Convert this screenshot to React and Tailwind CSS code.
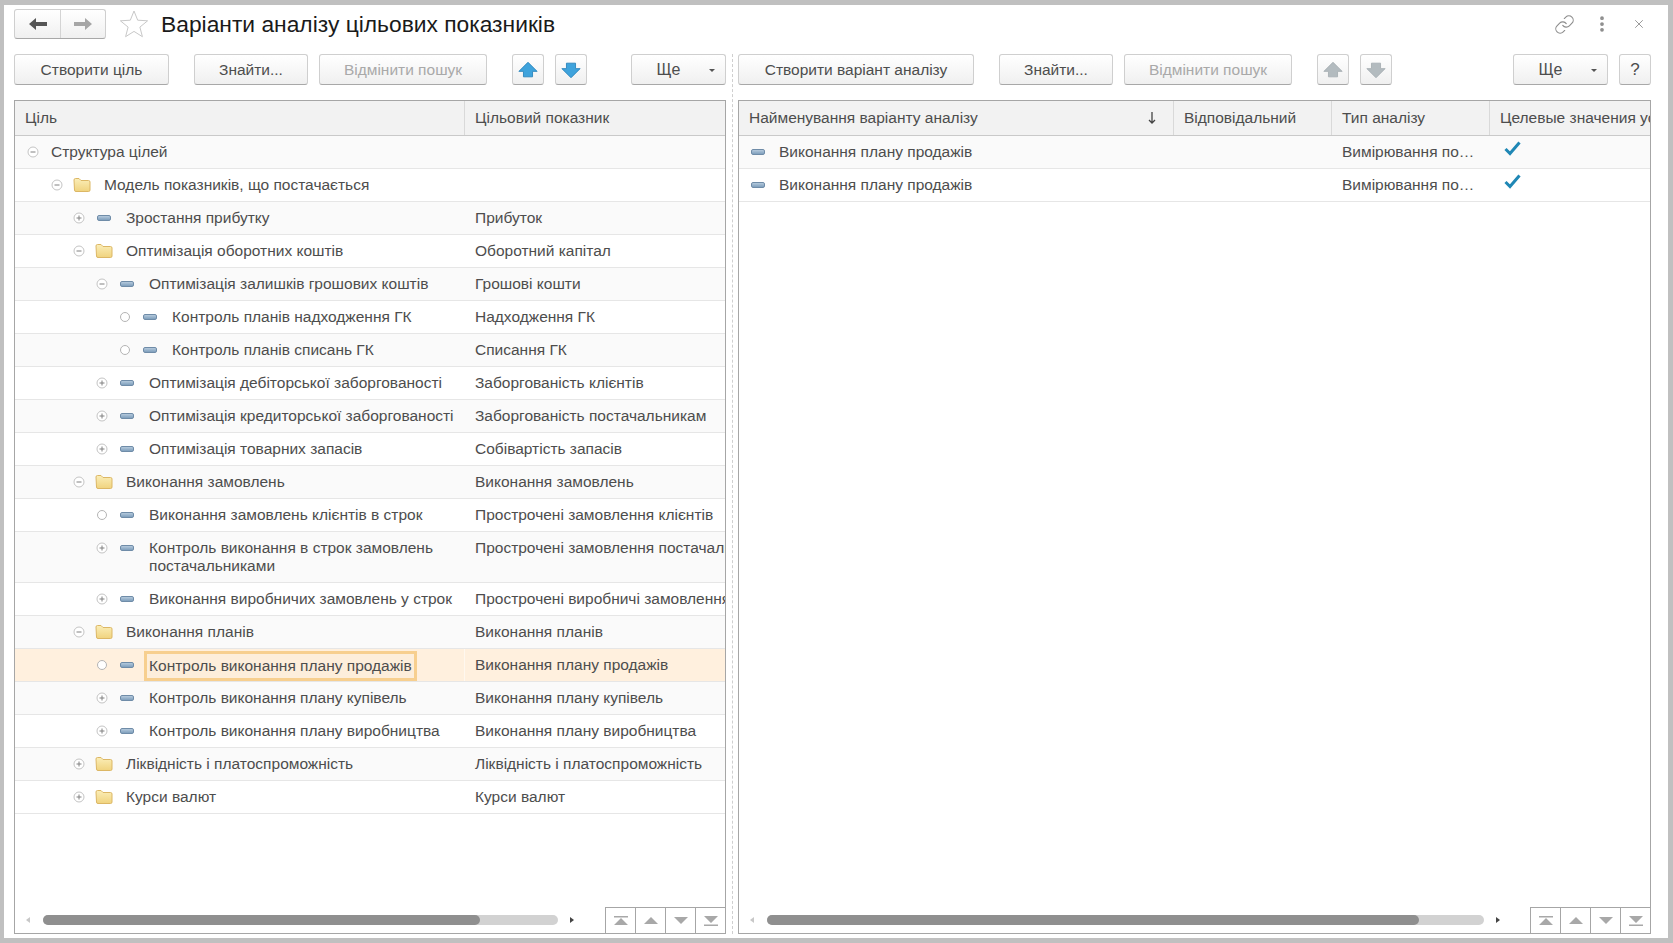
import { Link, MoreVertical, X } from 'lucide-react';

const treeRows = [
  { level: 0, mark: 'minus', name: 'Структура цілей', target: '' },
  { level: 1, mark: 'minus', icon: 'folder', name: 'Модель показників, що постачається', target: '' },
  { level: 2, mark: 'plus', icon: 'dash', name: 'Зростання прибутку', target: 'Прибуток' },
  { level: 2, mark: 'minus', icon: 'folder', name: 'Оптимізація оборотних коштів', target: 'Оборотний капітал' },
  { level: 3, mark: 'minus', icon: 'dash', name: 'Оптимізація залишків грошових коштів', target: 'Грошові кошти' },
  { level: 4, mark: 'leaf', icon: 'dash', name: 'Контроль планів надходження ГК', target: 'Надходження ГК' },
  { level: 4, mark: 'leaf', icon: 'dash', name: 'Контроль планів списань ГК', target: 'Списання ГК' },
  { level: 3, mark: 'plus', icon: 'dash', name: 'Оптимізація дебіторської заборгованості', target: 'Заборгованість клієнтів' },
  { level: 3, mark: 'plus', icon: 'dash', name: 'Оптимізація кредиторської заборгованості', target: 'Заборгованість постачальникам' },
  { level: 3, mark: 'plus', icon: 'dash', name: 'Оптимізація товарних запасів', target: 'Собівартість запасів' },
  { level: 2, mark: 'minus', icon: 'folder', name: 'Виконання замовлень', target: 'Виконання замовлень' },
  { level: 3, mark: 'leaf', icon: 'dash', name: 'Виконання замовлень клієнтів в строк', target: 'Прострочені замовлення клієнтів' },
  { level: 3, mark: 'plus', icon: 'dash', name: 'Контроль виконання в строк замовлень постачальниками', target: 'Прострочені замовлення постачальникам' },
  { level: 3, mark: 'plus', icon: 'dash', name: 'Виконання виробничих замовлень у строк', target: 'Прострочені виробничі замовлення' },
  { level: 2, mark: 'minus', icon: 'folder', name: 'Виконання планів', target: 'Виконання планів' },
  { level: 3, mark: 'leaf', icon: 'dash', name: 'Контроль виконання плану продажів', target: 'Виконання плану продажів', selected: true },
  { level: 3, mark: 'plus', icon: 'dash', name: 'Контроль виконання плану купівель', target: 'Виконання плану купівель' },
  { level: 3, mark: 'plus', icon: 'dash', name: 'Контроль виконання плану виробництва', target: 'Виконання плану виробництва' },
  { level: 2, mark: 'plus', icon: 'folder', name: 'Ліквідність і платоспроможність', target: 'Ліквідність і платоспроможність' },
  { level: 2, mark: 'plus', icon: 'folder', name: 'Курси валют', target: 'Курси валют' },
];

const levelPad = ['pl-[12px]', 'pl-[36px]', 'pl-[58px]', 'pl-[81px]', 'pl-[104px]'];

function TreeMark({ kind }) {
  if (kind === 'leaf') {
    return (
      <svg width="12" height="12" viewBox="0 0 12 12" className="shrink-0">
        <circle cx="6" cy="6" r="4.5" fill="#fff" stroke="#b4b4b4" />
      </svg>
    );
  }
  return (
    <svg width="12" height="12" viewBox="0 0 12 12" className="shrink-0">
      <circle cx="6" cy="6" r="5" fill="#fff" stroke="#c4c4c4" />
      <path d="M3.5 6h5" stroke="#808080" />
      {kind === 'plus' && <path d="M6 3.5v5" stroke="#808080" />}
    </svg>
  );
}

function FolderIcon() {
  return (
    <svg width="18" height="16" viewBox="0 0 18 16" className="shrink-0">
      <defs>
        <linearGradient id="folderFill" x1="0" y1="0" x2="0" y2="1">
          <stop offset="0" stopColor="#fbeeb8" />
          <stop offset="1" stopColor="#f0d37e" />
        </linearGradient>
      </defs>
      <path
        d="M1 3q0-1.5 1.5-1.5h3.5l2 2h7.500q1.500 0 1.500 1.500v8q0 1.500-1.500 1.500h-12.500q-1.500 0-1.500-1.500z"
        fill="url(#folderFill)"
        stroke="#dcb765"
      />
    </svg>
  );
}

function DashIcon() {
  return <span className="block h-[6px] w-[14px] shrink-0 rounded-[2px] border border-[#6f8ca8] bg-gradient-to-b from-[#b4c9dc] to-[#7f9fbc]" />;
}

function TreeRow({ row, index }) {
  const zebra = index % 2 === 0 ? 'bg-[#fafafa]' : 'bg-white';
  return (
    <div className={`flex border-b border-[#e6e6e6] ${row.selected ? 'bg-[#fff0de]' : zebra}`}>
      <div className={`flex w-[450px] shrink-0 items-start pt-[7px] pb-[7px] ${levelPad[row.level]} ${row.selected ? 'border-r border-[#fff8ef]' : ''}`}>
        <span className="flex h-[18px] shrink-0 items-center">
          <TreeMark kind={row.mark} />
        </span>
        {row.icon ? (
          <span className={`flex h-[18px] w-[41px] shrink-0 items-center ${row.icon === 'dash' ? 'pl-[12px]' : 'pl-[10px]'}`}>
            {row.icon === 'folder' ? <FolderIcon /> : <DashIcon />}
          </span>
        ) : (
          <span className="w-[12px] shrink-0" />
        )}
        <span
          className={
            row.selected
              ? '-mt-[5px] -mb-[7px] -ml-[5px] border-[3px] border-[#f7cf8f] bg-[#fdeedb] px-[2px] py-[3px]'
              : ''
          }
        >
          {row.name}
        </span>
      </div>
      <div className="min-w-0 flex-1 overflow-hidden whitespace-nowrap pt-[7px] pl-[10px]">{row.target}</div>
    </div>
  );
}

function ArrowIcon({ down, disabled }) {
  const fill = disabled ? '#b3bbbf' : '#3fa3dc';
  const stroke = disabled ? '#a8b0b4' : '#2b86bd';
  return (
    <svg width="20" height="18" viewBox="0 0 22 19" className={down ? 'rotate-180' : ''}>
      <path d="M11 1l10 10h-5v6h-10v-6h-5z" fill={fill} stroke={stroke} strokeLinejoin="round" />
    </svg>
  );
}

function Btn({ width, disabled, children, className = '' }) {
  return (
    <div
      className={`flex h-[31px] shrink-0 items-center justify-center rounded-[3px] border border-[#cfcfcf] border-b-[#a8a8a8] bg-gradient-to-b from-white to-[#f0f0f0] ${width} ${disabled ? 'text-[#a9a9a9]' : 'text-[#4d4d4d]'} ${className}`}
    >
      {children}
    </div>
  );
}

function MoreBtn({ className = '' }) {
  return (
    <Btn width="w-[95px]" className={`relative ${className}`}>
      <span className="pr-[20px] text-[16px]">Ще</span>
      <span className="absolute right-[10px] top-[14px] h-0 w-0 border-x-[3px] border-t-[3px] border-x-transparent border-t-[#555]" />
    </Btn>
  );
}

function HeaderCell({ width, children }) {
  return (
    <div className={`flex h-full items-center justify-between overflow-hidden whitespace-nowrap border-r border-[#d9d9d9] pl-[10px] ${width}`}>
      {children}
    </div>
  );
}

function Pager() {
  const shape = 'fill-[#a8a8a8]';
  return (
    <div className="flex h-[26px] shrink-0 border-t border-[#a6a6a6]">
      <div className="flex w-[30px] items-center justify-center border-l border-[#a6a6a6]">
        <svg width="14" height="10" viewBox="0 0 14 10">
          <path d="M0 0h14v1.500h-14zM7 2l7 7h-14z" className={shape} />
        </svg>
      </div>
      <div className="flex w-[30px] items-center justify-center border-l border-[#a6a6a6]">
        <svg width="14" height="8" viewBox="0 0 14 8">
          <path d="M7 0l7 7h-14z" className={shape} />
        </svg>
      </div>
      <div className="flex w-[30px] items-center justify-center border-l border-[#a6a6a6]">
        <svg width="14" height="8" viewBox="0 0 14 8">
          <path d="M7 7l7-7h-14z" className={shape} />
        </svg>
      </div>
      <div className="flex w-[30px] items-center justify-center border-l border-[#a6a6a6]">
        <svg width="14" height="10" viewBox="0 0 14 10">
          <path d="M0 8.500h14v1.500h-14zM7 7l7-7h-14z" className={shape} />
        </svg>
      </div>
    </div>
  );
}

function ScrollFooter({ trackClass, thumbClass }) {
  return (
    <div className="flex h-[26px] shrink-0 items-end">
      <div className="flex h-full flex-1 items-center">
        <span className="ml-[11px] h-0 w-0 border-y-[3px] border-r-[4px] border-y-transparent border-r-[#c8c8c8]" />
        <div className={`ml-[13px] h-[10px] rounded-[5px] bg-[#d2d2d2] ${trackClass}`}>
          <div className={`h-full rounded-[5px] bg-[#8f8f8f] ${thumbClass}`} />
        </div>
        <span className="ml-[12px] h-0 w-0 border-y-[3px] border-l-[4px] border-y-transparent border-l-[#444]" />
      </div>
      <Pager />
    </div>
  );
}

function VariantRow({ index }) {
  return (
    <div className={`flex h-[33px] border-b border-[#e6e6e6] ${index === 0 ? 'bg-[#fafafa]' : 'bg-white'}`}>
      <div className="flex w-[435px] shrink-0 items-center pl-[12px]">
        <DashIcon />
        <span className="ml-[14px]">Виконання плану продажів</span>
      </div>
      <div className="w-[158px] shrink-0" />
      <div className="flex w-[158px] shrink-0 items-center pl-[10px]">
        <span className="w-[134px] truncate">Вимірювання показників</span>
      </div>
      <div className="pl-[14px] pt-[5px]">
        <svg width="17" height="15" viewBox="0 0 17 15">
          <path d="M1.500 8l4.500 4.500 9.500-11" fill="none" stroke="#1f87b5" strokeWidth="3" />
        </svg>
      </div>
    </div>
  );
}

export default function App() {
  return (
    <div className="h-[943px] w-[1673px] overflow-hidden bg-[#c0c0c0] pt-[5px] pr-[5px] pb-[5px] pl-[4px] font-['Liberation_Sans',Arial,sans-serif] text-[15.5px] leading-[18px] text-[#4d4d4d]">
      <div className="flex h-full flex-col bg-white pt-[4px] pb-[4px] pl-[10px]">
        <div className="flex h-[30px] shrink-0 items-center">
          <div className="flex h-[30px] w-[92px] rounded-[3px] border border-[#cfcfcf] border-b-[#a8a8a8] bg-gradient-to-b from-white to-[#f0f0f0]">
            <div className="flex w-[46px] items-center justify-center border-r border-[#d4d4d4]">
              <svg width="20" height="14" viewBox="0 0 20 14">
                <path d="M1 7l7-6v4h11v4h-11v4z" fill="#555" />
              </svg>
            </div>
            <div className="flex flex-1 items-center justify-center">
              <svg width="20" height="14" viewBox="0 0 20 14">
                <path d="M19 7l-7-6v4h-11v4h11v4z" fill="#a6a6a6" />
              </svg>
            </div>
          </div>
          <svg width="30" height="30" viewBox="0 0 30 30" className="ml-[13px]">
            <path d="M15 2l3.700 9.200 9.900.6-7.700 6.300 2.500 9.600-8.400-5.300-8.400 5.300 2.500-9.600-7.700-6.300 9.900-.6z" fill="none" stroke="#c8c8c8" />
          </svg>
          <h1 className="ml-[12px] text-[22.8px] font-normal leading-[30px] text-[#1a1a1a]">Варіанти аналізу цільових показників</h1>
          <div className="ml-auto flex items-center pr-[22px] text-[#8c8c8c]">
            <Link size={21} strokeWidth={1.25} />
            <MoreVertical size={20} strokeWidth={2.5} className="ml-[17px]" />
            <X size={14} strokeWidth={1.5} className="ml-[20px]" />
          </div>
        </div>

        <div className="mt-[15px] flex min-h-0 flex-1">
          <div className="flex w-[712px] shrink-0 flex-col">
            <div className="flex h-[31px] shrink-0">
              <Btn width="w-[155px]">Створити ціль</Btn>
              <Btn width="w-[114px]" className="ml-[25px]">Знайти...</Btn>
              <Btn width="w-[168px]" className="ml-[11px]" disabled>Відмінити пошук</Btn>
              <Btn width="w-[32px]" className="ml-[25px]"><ArrowIcon /></Btn>
              <Btn width="w-[32px]" className="ml-[11px]"><ArrowIcon down /></Btn>
              <MoreBtn className="ml-auto" />
            </div>
            <div className="mt-[15px] flex min-h-0 flex-1 flex-col border border-[#a6a6a6]">
              <div className="flex h-[35px] shrink-0 items-center border-b border-[#c9c9c9] bg-[#f2f2f2]">
                <HeaderCell width="w-[450px] shrink-0">Ціль</HeaderCell>
                <div className="pl-[10px]">Цільовий показник</div>
              </div>
              <div className="min-h-0 flex-1">
                {treeRows.map((row, i) => (
                  <TreeRow key={row.name} row={row} index={i} />
                ))}
              </div>
              <ScrollFooter trackClass="w-[515px]" thumbClass="w-[437px]" />
            </div>
          </div>

          <div className="flex w-[12px] shrink-0 justify-center">
            <div className="h-full w-0 border-l border-dashed border-[#cfcfcf]" />
          </div>

          <div className="flex w-[913px] shrink-0 flex-col">
            <div className="flex h-[31px] shrink-0">
              <Btn width="w-[236px]">Створити варіант аналізу</Btn>
              <Btn width="w-[114px]" className="ml-[25px]">Знайти...</Btn>
              <Btn width="w-[168px]" className="ml-[11px]" disabled>Відмінити пошук</Btn>
              <Btn width="w-[32px]" className="ml-[25px]" disabled><ArrowIcon disabled /></Btn>
              <Btn width="w-[32px]" className="ml-[11px]" disabled><ArrowIcon down disabled /></Btn>
              <MoreBtn className="ml-auto" />
              <Btn width="w-[32px]" className="ml-[11px] text-[17px]">?</Btn>
            </div>
            <div className="mt-[15px] flex min-h-0 flex-1 flex-col border border-[#a6a6a6]">
              <div className="flex h-[35px] shrink-0 items-center border-b border-[#c9c9c9] bg-[#f2f2f2]">
                <HeaderCell width="w-[435px] shrink-0">
                  <span>Найменування варіанту аналізу</span>
                  <svg width="10" height="14" viewBox="0 0 10 14" className="mr-[16px]">
                    <path d="M5 1v11M2 9l3 3 3-3" fill="none" stroke="#444" strokeWidth="1.300" />
                  </svg>
                </HeaderCell>
                <HeaderCell width="w-[158px] shrink-0">Відповідальний</HeaderCell>
                <HeaderCell width="w-[158px] shrink-0">Тип аналізу</HeaderCell>
                <div className="min-w-0 flex-1 overflow-hidden whitespace-nowrap pl-[10px]">Целевые значения установлены</div>
              </div>
              <div className="min-h-0 flex-1">
                <VariantRow index={0} />
                <VariantRow index={1} />
              </div>
              <ScrollFooter trackClass="w-[717px]" thumbClass="w-[652px]" />
            </div>
          </div>
        </div>
      </div>
    </div>
  );
}
